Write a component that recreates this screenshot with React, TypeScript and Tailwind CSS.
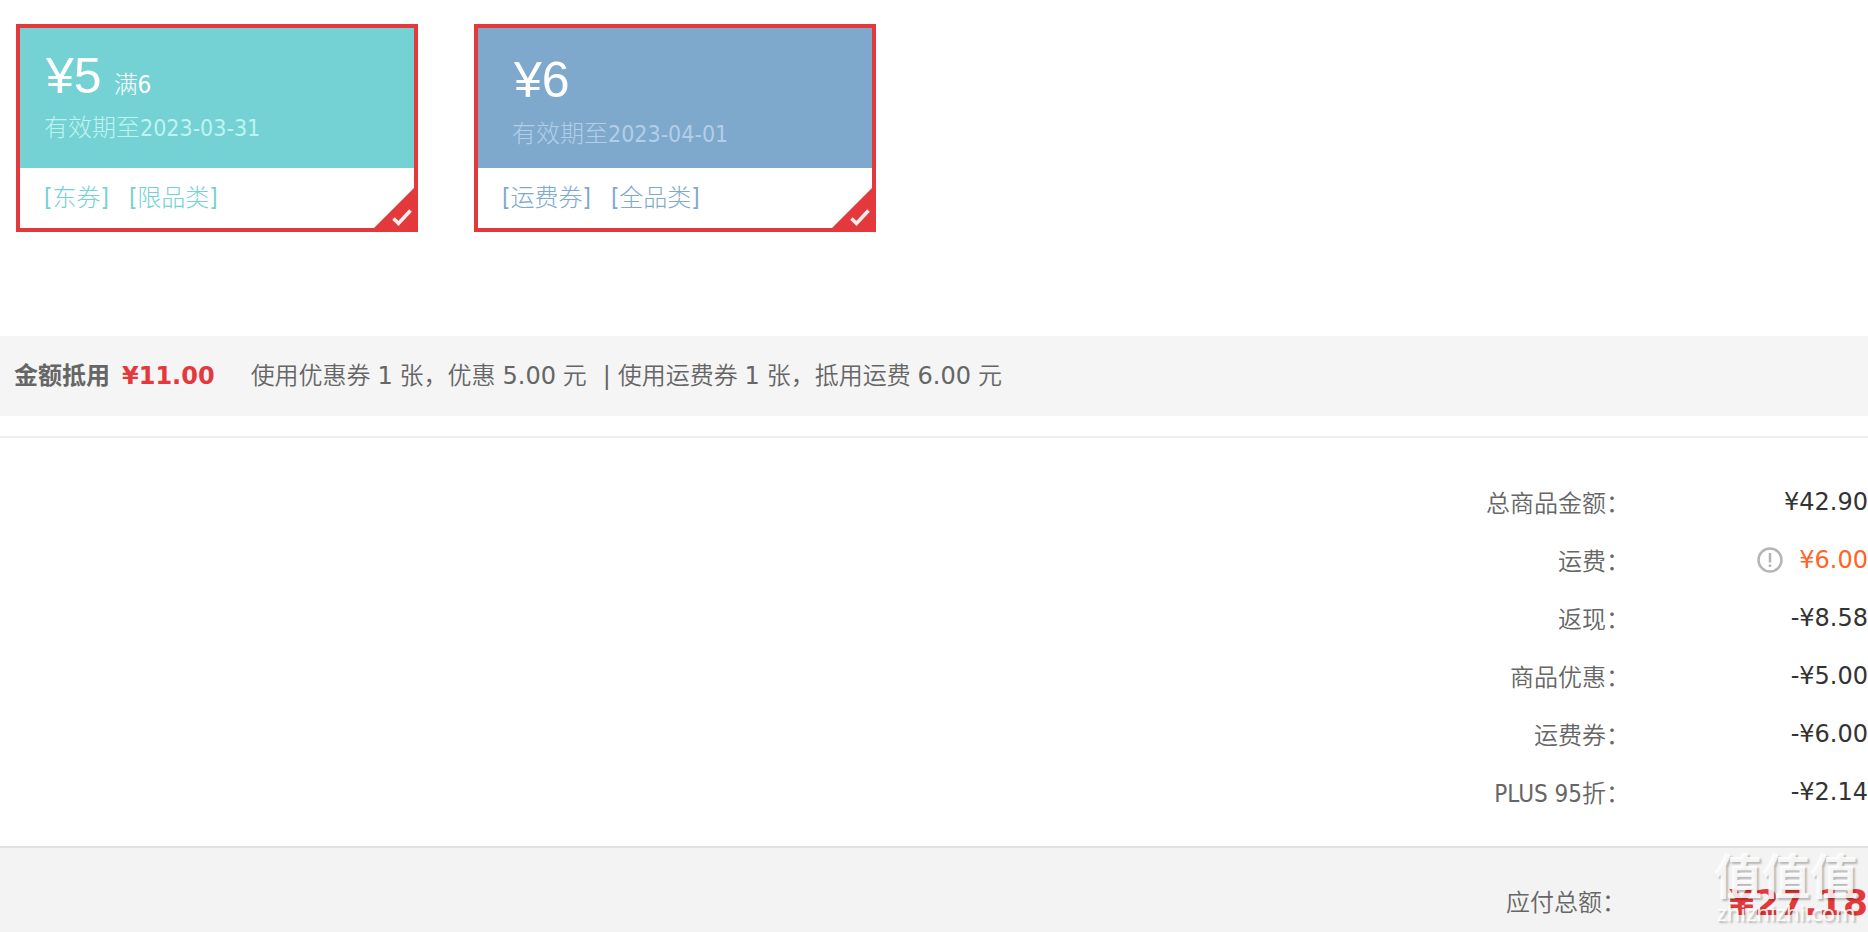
import React from 'react';

interface Coupon {
  id: string;
  amount: string;
  condition?: string;
  expires: string;
  tags: string[];
  headClass: string;
  dateClass: string;
  tagClass: string;
}

interface SummaryRow {
  label: string;
  value: string;
  highlight?: boolean;
}

const coupons: Coupon[] = [
  {
    id: 'dong',
    amount: '¥5',
    condition: '满6',
    expires: '2023-03-31',
    tags: ['东券', '限品类'],
    headClass: 'bg-[#74d2d4] pt-4 pl-6',
    dateClass: 'text-[#bff3f1]',
    tagClass: 'text-[#74d2d4]',
  },
  {
    id: 'freight',
    amount: '¥6',
    expires: '2023-04-01',
    tags: ['运费券', '全品类'],
    headClass: 'bg-[#7ea9cd] pt-5 pl-[34px]',
    dateClass: 'pt-0.5 text-[#b3cee6]',
    tagClass: 'text-[#7ea9cd]',
  },
];

const rows: SummaryRow[] = [
  { label: '总商品金额：', value: '¥42.90' },
  { label: '运费：', value: '¥6.00', highlight: true },
  { label: '返现：', value: '-¥8.58' },
  { label: '商品优惠：', value: '-¥5.00' },
  { label: '运费券：', value: '-¥6.00' },
  { label: 'PLUS 95折：', value: '-¥2.14' },
];

const Num: React.FC<{ children: React.ReactNode }> = ({ children }) => (
  <span className="font-['DejaVu_Sans',sans-serif]">{children}</span>
);

const CouponCard: React.FC<{ coupon: Coupon }> = ({ coupon }) => (
  <label className="relative block w-[402px] border-4 border-[#e4393c] bg-white cursor-pointer font-['DejaVu_Sans_Condensed','Noto_Sans_CJK_SC_Light','Noto_Sans_CJK_SC',sans-serif]">
    <input type="checkbox" defaultChecked className="peer sr-only" />
    <div className={`h-[140px] ${coupon.headClass}`}>
      <div className="flex items-baseline gap-3 h-16 pl-0.5 text-white">
        <span className="font-['Liberation_Sans',sans-serif] text-[50px] leading-[64px]">{coupon.amount}</span>
        {coupon.condition && <span>{coupon.condition}</span>}
      </div>
      <div className={`leading-10 ${coupon.dateClass}`}>
        有效期至<span className="text-[23px]">{coupon.expires}</span>
      </div>
    </div>
    <div className={`flex items-center gap-5 h-[60px] pl-6 ${coupon.tagClass}`}>
      {coupon.tags.map((tag) => (
        <span key={tag}>[{tag}]</span>
      ))}
    </div>
    <svg
      className="absolute -right-1 -bottom-1 w-12 h-12 invisible peer-checked:visible"
      viewBox="0 0 48 48"
      aria-hidden="true"
    >
      <path d="M48 0V48H0Z" fill="#e4393c" />
      <path d="M23.500 34.500L28.500 39.500L40.500 26.500" fill="none" stroke="#fdeeee" strokeWidth="3.600" />
    </svg>
  </label>
);

const App: React.FC = () => {
  return (
    <div className="relative min-h-screen flex flex-col overflow-hidden bg-white text-[24px] text-[#666] font-['DejaVu_Sans_Condensed','Noto_Sans_CJK_SC_DemiLight','Noto_Sans_CJK_SC',sans-serif]">
      {/* Coupons */}
      <section className="flex flex-wrap gap-14 px-4 pt-6 pb-[104px]">
        {coupons.map((coupon) => (
          <CouponCard key={coupon.id} coupon={coupon} />
        ))}
      </section>

      {/* Discount bar */}
      <section className="flex items-center min-h-20 px-3.5 bg-[#f5f5f5]">
        <strong className="font-['DejaVu_Sans','Noto_Sans_CJK_SC',sans-serif]">金额抵用</strong>
        <strong className="ml-3 mr-9 text-[#e4393c] font-['DejaVu_Sans',sans-serif]">¥11.00</strong>
        <span>
          使用优惠券 <Num>1</Num> 张，优惠 <Num>5.00</Num> 元
        </span>
        <span className="ml-4">
          <Num>|</Num> 使用运费券 <Num>1</Num> 张，抵用运费 <Num>6.00</Num> 元
        </span>
      </section>

      {/* Summary */}
      <dl className="mt-5 pt-9 pb-6 border-t-2 border-[#eee]">
        {rows.map((row) => (
          <div key={row.label} className="flex items-center justify-end h-[58px]">
            <dt className="pt-0.5">{row.label}</dt>
            <dd
              className={`flex items-center justify-end gap-4 w-[238px] pb-0.5 font-['DejaVu_Sans',sans-serif] ${
                row.highlight ? 'text-[#ff6428]' : 'text-[#333]'
              }`}
            >
              {row.highlight && (
                <button type="button" aria-label="运费说明" className="cursor-pointer">
                  <svg className="w-[26px] h-[26px]" viewBox="0 0 26 26" fill="none" stroke="#b5b5b5">
                    <circle cx="13" cy="13" r="11.500" strokeWidth="2.500" />
                    <path d="M13 6V15.500M13 17.500V20" strokeWidth="2.500" />
                  </svg>
                </button>
              )}
              {row.value}
            </dd>
          </div>
        ))}
      </dl>

      {/* Total */}
      <footer className="flex grow items-start justify-end pt-7 border-t-2 border-[#e2e2e2] bg-[#f3f3f3]">
        <span className="leading-[54px]">应付总额：</span>
        <strong className="w-[242px] text-right text-[36px] leading-[54px] text-[#e4393c] font-['DejaVu_Sans',sans-serif]">
          ¥27.18
        </strong>
      </footer>

      {/* Watermark */}
      <div className="absolute right-2.5 bottom-2 w-36 text-center text-white/85 pointer-events-none [text-shadow:2px_2px_2px_rgb(0_0_0/0.25)]">
        <div className="text-[48px] leading-[54px] font-bold font-['Noto_Sans_CJK_SC',sans-serif]">值值值</div>
        <div className="text-[22px] leading-6 font-['Noto_Sans',sans-serif]">zhizhizhi.com</div>
      </div>
    </div>
  );
};

export default App;
